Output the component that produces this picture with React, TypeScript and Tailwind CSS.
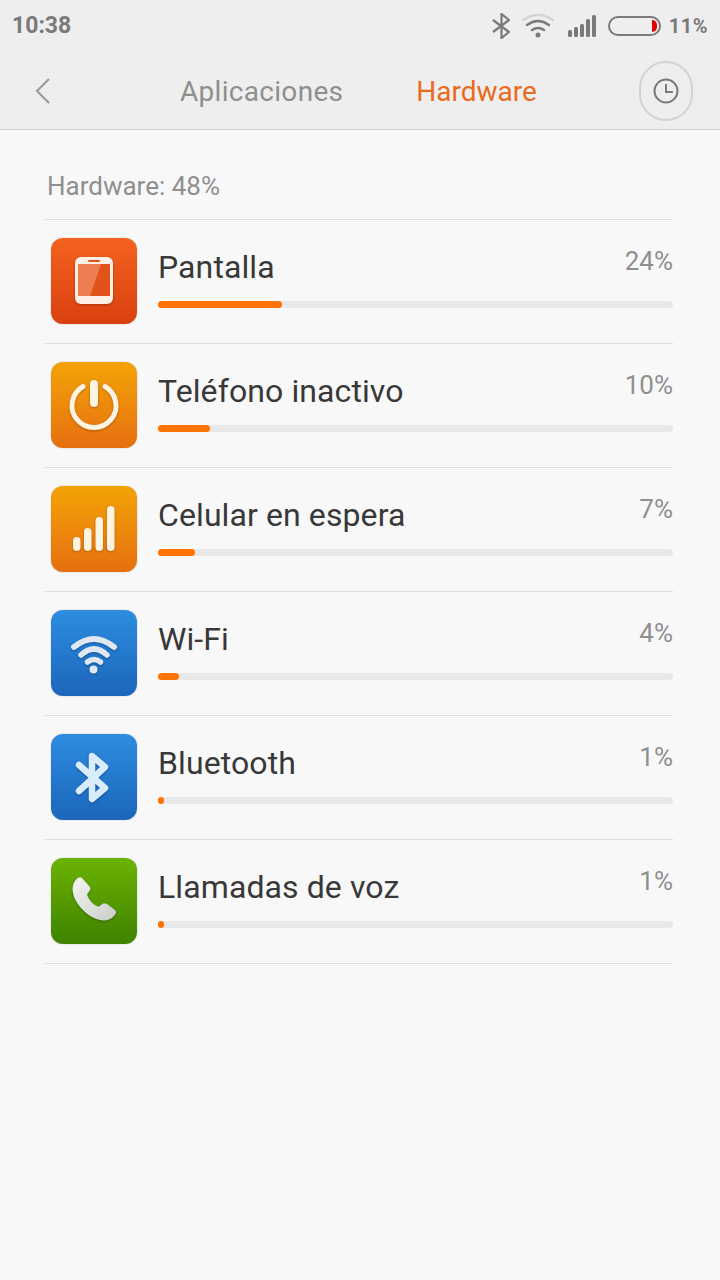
import type { ReactNode } from 'react';

type Row = {
  name: string;
  pct: string;
  bar: number;
  gradient: string;
  icon: ReactNode;
};

function ScreenIcon() {
  return (
    <svg width="86" height="86" viewBox="0 0 86 86" className="drop-shadow-[0_1px_1px_rgba(120,30,0,0.5)]">
      <rect x="24" y="19" width="38" height="47" rx="6" fill="#ffeee5" />
      <rect x="27" y="26" width="32" height="32" fill="#e2531c" />
      <path d="M27 26h23l-11 32H27z" fill="#ee7d52" />
      <rect x="37" y="22" width="12" height="2" rx="1" fill="#e2531c" />
    </svg>
  );
}

function PowerIcon() {
  return (
    <svg width="86" height="86" viewBox="0 0 86 86" fill="none" className="drop-shadow-[0_1px_1px_rgba(120,60,0,0.5)]">
      <path d="M32 24.500A22 22 0 1 0 54 24.500" stroke="#fff3e2" strokeWidth="5" strokeLinecap="round" />
      <rect x="39" y="18" width="8" height="27" rx="4" fill="#fff3e2" />
    </svg>
  );
}

function SignalIcon() {
  return (
    <svg width="86" height="86" viewBox="0 0 86 86" fill="#fff3e2" className="drop-shadow-[0_1px_1px_rgba(120,60,0,0.5)]">
      <rect x="22" y="51" width="7.500" height="14" rx="3.750" />
      <rect x="33" y="42" width="7.500" height="23" rx="3.750" />
      <rect x="44.500" y="31" width="7.500" height="34" rx="3.750" />
      <rect x="56" y="20" width="7.500" height="45" rx="3.750" />
    </svg>
  );
}

function WifiIcon() {
  return (
    <svg width="86" height="86" viewBox="0 0 86 86" fill="none" stroke="#dfe8f2" strokeLinecap="round" className="drop-shadow-[0_1px_1px_rgba(0,40,100,0.5)]">
      <path d="M23 37Q43 21 63 37" strokeWidth="6" />
      <path d="M30 45Q43 33 56 45" strokeWidth="5.500" />
      <path d="M36.500 52Q43 47 49.500 52" strokeWidth="5.500" />
      <circle cx="42.500" cy="59.500" r="4" fill="#dfe8f2" strokeWidth="0" />
    </svg>
  );
}

function BluetoothIcon() {
  return (
    <svg width="86" height="86" viewBox="0 0 86 86" fill="none" className="drop-shadow-[0_1px_1px_rgba(0,40,100,0.5)]">
      <path
        d="M28 31L54 54 41 65V22L54 33 28 57"
        stroke="#d8ecfb"
        strokeWidth="6.500"
        strokeLinejoin="round"
        strokeLinecap="round"
      />
    </svg>
  );
}

function PhoneIcon() {
  return (
    <svg width="86" height="86" viewBox="0 0 86 86" className="drop-shadow-[0_1px_1px_rgba(20,60,0,0.5)]">
      <defs>
        <linearGradient id="phone" x1="0" y1="0" x2="1" y2="1">
          <stop offset="0" stopColor="#f6f6f4" />
          <stop offset="1" stopColor="#c9cdc6" />
        </linearGradient>
      </defs>
      <path
        transform="translate(-3 -1)"
        d="M27 24c2-3 5-5 7-3l8 9c1 2 0 4-2 6-1 1-1 2 0 4 2 4 6 8 9 9 2 1 3 0 5-2 2-1 3-1 5 0l8 6c2 2 1 4-1 6-4 5-12 6-20 2-10-5-19-15-21-25-1-5 0-9 2-12z"
        fill="url(#phone)"
      />
    </svg>
  );
}

const rows: Row[] = [
  { name: 'Pantalla', pct: '24%', bar: 124, gradient: 'from-[#f4621f] to-[#d9400e]', icon: <ScreenIcon /> },
  { name: 'Teléfono inactivo', pct: '10%', bar: 52, gradient: 'from-[#f3a305] to-[#e66f10]', icon: <PowerIcon /> },
  { name: 'Celular en espera', pct: '7%', bar: 37, gradient: 'from-[#f3a305] to-[#e66f10]', icon: <SignalIcon /> },
  { name: 'Wi-Fi', pct: '4%', bar: 21, gradient: 'from-[#2d8de0] to-[#1c66bb]', icon: <WifiIcon /> },
  { name: 'Bluetooth', pct: '1%', bar: 6, gradient: 'from-[#2d8de0] to-[#1c66bb]', icon: <BluetoothIcon /> },
  { name: 'Llamadas de voz', pct: '1%', bar: 6, gradient: 'from-[#6bb404] to-[#3f8200]', icon: <PhoneIcon /> },
];

function StatusBar() {
  return (
    <div className="flex h-[52px] items-center justify-between pl-[12px] pr-[12px] text-[#7a7a7a]">
      <span className="pt-[1px] text-[23px] font-bold">10:38</span>
      <div className="flex items-center">
        {/* bluetooth */}
        <svg width="18" height="26" viewBox="0 0 18 26" fill="none" stroke="#7a7a7a" strokeWidth="2.200">
          <path d="M1 7l16 12-7.500 6V1L17 7 1 19" />
        </svg>
        {/* wifi */}
        <svg width="32" height="26" viewBox="0 0 32 26" fill="none" className="ml-[12px]" strokeLinecap="round">
          <path d="M1 7q15-10 30 0" stroke="#d4d4d4" strokeWidth="2.500" />
          <path d="M5 12q11-8 22 0" stroke="#7a7a7a" strokeWidth="2.500" />
          <path d="M10 17q6-4 12 0" stroke="#7a7a7a" strokeWidth="2.500" />
          <circle cx="16" cy="22" r="2.500" fill="#7a7a7a" />
        </svg>
        {/* signal */}
        <svg width="28" height="24" viewBox="0 0 28 24" fill="#7a7a7a" className="ml-[14px]">
          <rect x="0" y="16" width="4" height="7" rx="1.500" />
          <rect x="6" y="13" width="4" height="10" rx="1.500" />
          <rect x="12" y="10" width="4" height="13" rx="1.500" />
          <rect x="18" y="5" width="4" height="18" rx="1.500" />
          <rect x="24" y="1" width="4" height="22" rx="1.500" />
        </svg>
        {/* battery */}
        <div className="ml-[12px] flex h-[20px] w-[53px] items-center justify-end overflow-hidden rounded-full border-2 border-[#7a7a7a] pr-[2px]">
          <div className="h-[12px] w-[5px] rounded-r-full bg-[#e00000]" />
        </div>
        <span className="ml-[8px] text-[20px] font-bold tracking-[0.5px]">11%</span>
      </div>
    </div>
  );
}

function NavBar() {
  return (
    <div className="relative flex h-[77px] items-center">
      <svg width="18" height="28" viewBox="0 0 18 28" fill="none" stroke="#9b9b9b" strokeWidth="2.200" className="ml-[34px]">
        <path d="M15 2L3 14l12 12" />
      </svg>
      <div className="ml-[128px] pt-[2px] text-[28px] tracking-[0.3px] text-[#8f8f8f]">Aplicaciones</div>
      <div className="ml-[73px] pt-[2px] text-[28px] text-[#ea6a20]">Hardware</div>
      <div className="ml-auto mr-[27px] flex h-[60px] w-[54px] items-center justify-center rounded-full border-2 border-[#d2d2d2]">
        <svg width="26" height="26" viewBox="0 0 26 26" fill="none" stroke="#7a7a7a" strokeWidth="2">
          <circle cx="13" cy="13" r="11.500" />
          <path d="M13 6v8h7" />
        </svg>
      </div>
    </div>
  );
}

function HardwareRow({ row }: { row: Row }) {
  return (
    <div className="flex h-[124px] items-start border-b border-[#dedede] pl-[6px]">
      <div className={`mt-[18px] h-[86px] w-[86px] rounded-[12px] bg-gradient-to-b ${row.gradient} shadow-[0_0_1px_rgba(0,0,0,0.5)]`}>
        {row.icon}
      </div>
      <div className="ml-[21px] flex flex-1 flex-col">
        <div className="mt-[25px] flex h-[44px] items-start justify-between">
          <span className="text-[32px] leading-[44px] tracking-[0.1px] text-[#383838]">{row.name}</span>
          <span className="-mt-[6px] text-[26px] leading-[44px] text-[#8f8f8f]">{row.pct}</span>
        </div>
        <div className="mt-[12px] h-[7px] rounded-full bg-[#e8e8e8]">
          <div className="h-[7px] rounded-full bg-[#ff7300]" style={{ width: row.bar }} />
        </div>
      </div>
    </div>
  );
}

export default function App() {
  return (
    <div className="h-[1280px] w-[720px] overflow-hidden bg-[#f8f8f8] font-['Roboto',sans-serif]">
      <div className="h-[130px] border-b border-[#cfcfcf] bg-[#eeeeee]">
        <StatusBar />
        <NavBar />
      </div>
      <div className="ml-[45px] mr-[47px]">
        <div className="flex h-[90px] items-start border-b border-[#dedede] pl-[2px] pt-[40px] text-[26px] leading-[32px] text-[#8f8f8f]">
          Hardware: 48%
        </div>
        {rows.map((row) => (
          <HardwareRow key={row.name} row={row} />
        ))}
      </div>
    </div>
  );
}
